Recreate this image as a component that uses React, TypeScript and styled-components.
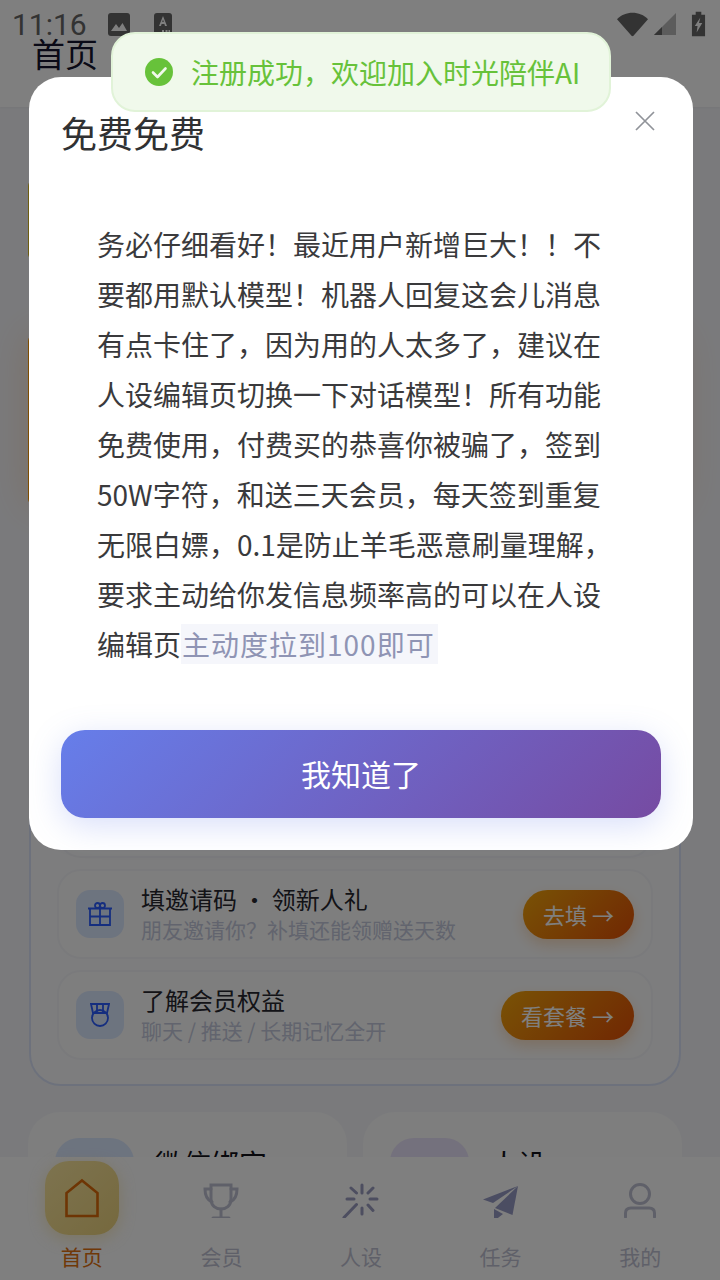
import React from "react";
import styled, { createGlobalStyle } from "styled-components";

const GlobalStyle = createGlobalStyle`
  html, body {
    margin: 0;
    padding: 0;
    background: #ffffff;
  }
  * {
    box-sizing: border-box;
  }
`;

const Page = styled.div`
  position: relative;
  display: flex;
  flex-direction: column;
  width: 720px;
  height: 1280px;
  overflow: hidden;
  font-family: "Noto Sans CJK SC", "Noto Sans", sans-serif;
  background: #f4f5f9;
`;

const TopArea = styled.div`
  flex: none;
  height: 107px;
  background: #ffffff;
  box-shadow: 0 1px 2px rgba(0, 0, 0, 0.04);
`;

const StatusBar = styled.div`
  display: flex;
  align-items: center;
  height: 36px;
  padding: 12px 14px 0 12px;
  color: #666666;
`;

const Time = styled.span`
  width: 70px;
  margin: 2px 26px 0 0;
  font-family: "Roboto", sans-serif;
  font-size: 30px;
  line-height: 34px;
`;

const StatusLeft = styled.div`
  display: flex;
  align-items: center;
  gap: 24px;
`;

const StatusRight = styled.div`
  display: flex;
  align-items: center;
  gap: 6px;
  margin-left: auto;
`;

const BatteryIcon = styled.svg`
  margin-left: 9px;
`;

const Title = styled.h1`
  margin: -1px 0 0;
  padding-left: 32px;
  font-size: 33px;
  font-weight: 400;
  line-height: 36px;
  color: #14142e;
`;

const Content = styled.div`
  flex: 1;
  min-height: 0;
  overflow: hidden;
  display: flex;
  flex-direction: column;
  padding: 73px 28px 0;
`;

const Banner = styled.div<{ $tone: "gold" | "orange" }>`
  flex: none;
  width: 654px;
  height: ${(p) => (p.$tone === "gold" ? 80 : 170)}px;
  margin-bottom: ${(p) => (p.$tone === "gold" ? 75 : 175)}px;
  border-radius: 6px;
  background: ${(p) => (p.$tone === "gold" ? "#dcbc20" : "#ff9a00")};
  box-shadow: ${(p) =>
    p.$tone === "orange" ? "0 0 40px rgba(255, 150, 40, 0.22)" : "none"};
`;

const MemberCard = styled.div`
  flex: none;
  display: flex;
  flex-direction: column;
  gap: 11px;
  width: 652px;
  margin-left: 1px;
  padding: 86px 26px 24px;
  border: 2px solid #dbe3f8;
  border-radius: 32px;
  background: #fafbfd;
`;

const Row = styled.div`
  display: flex;
  align-items: center;
  height: 90px;
  padding: 0 17px;
  border: 2px solid #f4f5f8;
  border-radius: 24px;
  background: #fdfdfd;
`;

const RowIcon = styled.div`
  flex: none;
  display: flex;
  align-items: center;
  justify-content: center;
  width: 48px;
  height: 48px;
  margin-right: 17px;
  border-radius: 14px;
  background: #dbe8ff;
`;

const RowText = styled.div`
  flex: 1;
  min-width: 0;
`;

const RowTitle = styled.div`
  font-size: 24px;
  line-height: 30px;
  color: #26262e;
`;

const RowSub = styled.div`
  font-size: 21px;
  line-height: 30px;
  color: #c4c9dc;
`;

const GoButton = styled.div`
  flex: none;
  height: 49px;
  padding: 0 20px;
  border-radius: 25px;
  font-size: 22px;
  line-height: 49px;
  color: #ffffff;
  background: linear-gradient(135deg, #f2a50c, #e24f06);
  box-shadow: 0 6px 14px rgba(240, 130, 20, 0.25);
`;

const Shortcuts = styled.div`
  flex: none;
  display: grid;
  grid-template-columns: 319px 319px;
  gap: 16px;
  margin-top: 26px;
`;

const Shortcut = styled.div`
  display: flex;
  gap: 21px;
  height: 140px;
  padding: 26px 27px;
  border-radius: 32px;
  background: #fcfcfc;
`;

const ShortcutIcon = styled.div<{ $tint: string }>`
  flex: none;
  width: 79px;
  height: 79px;
  border-radius: 24px;
  background: ${(p) => p.$tint};
`;

const ShortcutName = styled.div`
  font-size: 28px;
  line-height: 50px;
  color: #111118;
`;

const TabBar = styled.nav`
  flex: none;
  display: grid;
  grid-template-columns: repeat(5, 1fr);
  height: 123px;
  padding: 4px 10px 0 12px;
  background: #fefefe;
`;

const Tab = styled.div<{ $active?: boolean }>`
  display: flex;
  flex-direction: column;
  align-items: center;
  font-size: 21px;
  line-height: 30px;
  color: ${(p) => (p.$active ? "#e0700f" : "#bfc1d2")};
`;

const TabIcon = styled.div<{ $active?: boolean }>`
  display: flex;
  align-items: center;
  justify-content: center;
  width: 74px;
  height: 74px;
  margin-bottom: 6px;
  border-radius: 24px;
  background: ${(p) =>
    p.$active ? "linear-gradient(135deg, #fbe79f, #ecd27c)" : "transparent"};
  box-shadow: ${(p) =>
    p.$active ? "0 4px 16px rgba(240, 200, 90, 0.35)" : "none"};
`;

const Overlay = styled.div`
  position: absolute;
  inset: 0;
  background: rgba(0, 0, 0, 0.5);
`;

const Dialog = styled.div`
  position: absolute;
  top: 77px;
  left: 29px;
  width: 664px;
  height: 773px;
  padding: 30px 32px;
  border-radius: 32px;
  background: #ffffff;
`;

const DialogHead = styled.div`
  display: flex;
  justify-content: space-between;
  align-items: flex-start;
  height: 50px;
  margin-bottom: 62px;
`;

const DialogTitle = styled.h2`
  margin: 0;
  font-size: 36px;
  font-weight: 400;
  line-height: 50px;
  color: #303133;
`;

const CloseIcon = styled.svg`
  flex: none;
  margin: 4px 6px 0 0;
`;

const Notice = styled.p`
  width: 520px;
  margin: 0 0 61px 36px;
  font-size: 28px;
  line-height: 50px;
  color: #3a3a3c;
`;

const Highlight = styled.span`
  padding: 0 3px 0 1px;
  letter-spacing: 1px;
  color: #8f94b4;
  background: #f5f6fb;
`;

const ConfirmButton = styled.button`
  display: block;
  width: 600px;
  height: 88px;
  padding: 0 0 2px;
  border: none;
  border-radius: 24px;
  font-family: inherit;
  font-size: 30px;
  color: #ffffff;
  background: linear-gradient(135deg, #667eea, #764ba2);
  box-shadow: 0 8px 32px rgba(102, 126, 234, 0.25);
`;

const Toast = styled.div`
  position: absolute;
  top: 32px;
  left: 111px;
  display: flex;
  align-items: center;
  gap: 18px;
  width: 500px;
  height: 80px;
  padding-left: 32px;
  border: 2px solid #e1f3d8;
  border-radius: 24px;
  font-size: 28px;
  color: #67c23a;
  background: #f0f9eb;
`;

const GiftIcon = () => (
  <svg width="24" height="24" viewBox="0 0 24 24" fill="none" stroke="#2a5cff" strokeWidth="1.8">
    <path d="M0 6.5H24M2 6.5V23H22V6.5M12 6.5V23M2 14.5H22" />
    <circle cx="9.5" cy="3.5" r="2.5" />
    <circle cx="14.5" cy="3.5" r="2.5" />
  </svg>
);

const MedalIcon = () => (
  <svg width="20" height="24" viewBox="0 0 20 24" fill="none" stroke="#2a5cff" strokeWidth="1.8">
    <path d="M1 1H19L17 10H3ZM7 1V9M13 1V9" />
    <circle cx="10" cy="15" r="8" />
  </svg>
);

const tabs = [
  {
    label: "首页",
    icon: (
      <svg width="36" height="40" viewBox="0 0 36 40" fill="none" stroke="#dc6a08" strokeWidth="2.6">
        <path d="M18 2.5L33.5 15V38H2.5V15Z" />
      </svg>
    ),
  },
  {
    label: "会员",
    icon: (
      <svg width="36" height="40" viewBox="0 -4 36 40" fill="none" stroke="#bfc1d2" strokeWidth="3" strokeLinecap="round">
        <path d="M8 3H28V17C28 24 23 27 18 27S8 24 8 17Z" />
        <path d="M8 7H2C2 14 4 18 9 20M28 7H34C34 14 32 18 27 20M18 27V36M10 36H26" />
      </svg>
    ),
  },
  {
    label: "人设",
    icon: (
      <svg width="40" height="40" viewBox="0 -4 40 40" fill="none" stroke="#9a9cc0" strokeWidth="3" strokeLinecap="round">
        <path d="M21 3V11M21 26V32M6 17H13M29 17H36M10 6L15.5 11M32 6L27 11M27 23L32 28.5M3 35.5L15.5 22.5" />
      </svg>
    ),
  },
  {
    label: "任务",
    icon: (
      <svg width="36" height="40" viewBox="0 -7 36 40" fill="#969ac4">
        <polygon points="35,1 0,14.5 10,18" />
        <polygon points="35,1 29.5,30 12,23" />
        <polygon points="11,24 20,29 11,36" />
      </svg>
    ),
  },
  {
    label: "我的",
    icon: (
      <svg width="36" height="40" viewBox="0 -4 36 40" fill="none" stroke="#bfc1d2" strokeWidth="3" strokeLinecap="round">
        <circle cx="18" cy="12" r="9.5" />
        <path d="M3.5 35V31Q3.5 26 9 26H27Q32.5 26 32.5 31V35" />
      </svg>
    ),
  },
];

export default function App() {
  return (
    <Page>
      <GlobalStyle />
      <TopArea>
        <StatusBar>
          <Time>11:16</Time>
          <StatusLeft>
            <svg width="22" height="23" viewBox="0 0 22 23">
              <rect width="22" height="23" rx="3" fill="#666666" />
              <path d="M3 18L8 11L11 15L14.5 10L19 18Z" fill="#ffffff" />
            </svg>
            <svg width="18" height="22" viewBox="0 0 18 22">
              <rect width="18" height="22" rx="3" fill="#666666" />
              <path d="M5 13L9 3L13 13H11L10.4 11H7.6L7 13ZM8.2 9H9.8L9 6.5Z" fill="#ffffff" />
              <path d="M8 18H10M11.5 18H13.5M14.5 18H16" stroke="#ffffff" strokeWidth="2" />
            </svg>
          </StatusLeft>
          <StatusRight>
            <svg width="31" height="25" viewBox="0 0 32 25">
              <path d="M0 7C8-2 24-2 32 7L17 24Q16 25 15 24Z" fill="#666666" />
            </svg>
            <svg width="22" height="22" viewBox="0 0 22 22">
              <path d="M22 0V22H0Z" fill="#b8b8b8" />
              <path d="M8 14V22H0Z" fill="#666666" />
            </svg>
            <BatteryIcon width="15" height="26" viewBox="0 0 16 26">
              <path d="M5 0H11V3H15V26H1V3H5Z" fill="#666666" />
              <path d="M10 6L4 15H7L6 22L12 12H8.5Z" fill="#ffffff" />
            </BatteryIcon>
          </StatusRight>
        </StatusBar>
        <Title>首页</Title>
      </TopArea>

      <Content>
        <Banner $tone="gold" />
        <Banner $tone="orange" />
        <MemberCard>
          <Row />
          <Row>
            <RowIcon>
              <GiftIcon />
            </RowIcon>
            <RowText>
              <RowTitle>填邀请码 · 领新人礼</RowTitle>
              <RowSub>朋友邀请你？补填还能领赠送天数</RowSub>
            </RowText>
            <GoButton>去填 →</GoButton>
          </Row>
          <Row>
            <RowIcon>
              <MedalIcon />
            </RowIcon>
            <RowText>
              <RowTitle>了解会员权益</RowTitle>
              <RowSub>聊天 / 推送 / 长期记忆全开</RowSub>
            </RowText>
            <GoButton>看套餐 →</GoButton>
          </Row>
        </MemberCard>
        <Shortcuts>
          <Shortcut>
            <ShortcutIcon $tint="#dbe8ff" />
            <ShortcutName>微信绑定</ShortcutName>
          </Shortcut>
          <Shortcut>
            <ShortcutIcon $tint="#e9e2fa" />
            <ShortcutName>人设</ShortcutName>
          </Shortcut>
        </Shortcuts>
      </Content>

      <TabBar>
        {tabs.map((tab, i) => (
          <Tab key={tab.label} $active={i === 0}>
            <TabIcon $active={i === 0}>{tab.icon}</TabIcon>
            {tab.label}
          </Tab>
        ))}
      </TabBar>

      <Overlay />

      <Dialog>
        <DialogHead>
          <DialogTitle>免费免费</DialogTitle>
          <CloseIcon width="20" height="20" viewBox="0 0 20 20" fill="none" stroke="#909399" strokeWidth="1.7">
            <path d="M1 1L19 19M19 1L1 19" />
          </CloseIcon>
        </DialogHead>
        <Notice>
          务必仔细看好！最近用户新增巨大！！不要都用默认模型！机器人回复这会儿消息有点卡住了，因为用的人太多了，建议在人设编辑页切换一下对话模型！所有功能免费使用，付费买的恭喜你被骗了，签到50W字符，和送三天会员，每天签到重复无限白嫖，0.1是防止羊毛恶意刷量理解，要求主动给你发信息频率高的可以在人设编辑页
          <Highlight>主动度拉到100即可</Highlight>
        </Notice>
        <ConfirmButton>我知道了</ConfirmButton>
      </Dialog>

      <Toast>
        <svg width="28" height="28" viewBox="0 0 28 28">
          <circle cx="14" cy="14" r="14" fill="#67c23a" />
          <path d="M8 14.5L12.5 19L20.5 10.5" fill="none" stroke="#f0f9eb" strokeWidth="2.6" strokeLinecap="round" strokeLinejoin="round" />
        </svg>
        注册成功，欢迎加入时光陪伴AI
      </Toast>
    </Page>
  );
}
